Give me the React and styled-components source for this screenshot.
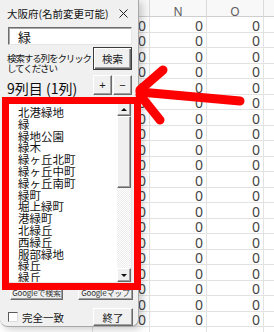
import styled, { createGlobalStyle } from "styled-components";

const GlobalStyle = createGlobalStyle`
  html, body {
    margin: 0;
    padding: 0;
  }
  body {
    width: 274px;
    height: 332px;
    overflow: hidden;
    background: #fff;
    font-family: "Noto Sans CJK JP", "Noto Sans", sans-serif;
  }
`;

// L is under the dialog and P runs past the window edge, so they stay blank
const columns = [
  { name: "", value: "" },
  { name: "", value: "0" },
  { name: "N", value: "0" },
  { name: "O", value: "0" },
  { name: "", value: "" },
];
const rowCount = 20;

const places = [
  "北港緑地",
  "緑",
  "緑地公園",
  "緑木",
  "緑ヶ丘北町",
  "緑ヶ丘中町",
  "緑ヶ丘南町",
  "緑町",
  "堀上緑町",
  "港緑町",
  "北緑丘",
  "西緑丘",
  "服部緑地",
  "緑丘",
  "緑丘",
];

function App() {
  return (
    <Screen>
      <GlobalStyle />
      <Sheet>
        {columns.map((c, i) => (
          <HeadCell key={i}>{c.name}</HeadCell>
        ))}
        {Array.from({ length: rowCount }).map((_, r) =>
          columns.map((c, i) => <Cell key={i + "-" + r}>{c.value}</Cell>)
        )}
        {/* the next row only peeks in under the window edge */}
        {columns.map((c, i) => (
          <Cell key={"last" + i} />
        ))}
      </Sheet>

      <Dialog>
        <TitleBar>
          <span>大阪府(名前変更可能)</span>
          <svg width="9" height="9" viewBox="0 0 9 9">
            <path d="M0.5 0.5 L8.5 8.5 M8.5 0.5 L0.5 8.5" stroke="#222" strokeWidth="1" />
          </svg>
        </TitleBar>

        <SearchInput defaultValue="緑" readOnly />

        <SearchRow>
          <Hint>
            <div>検索する列をクリック</div>
            <div>してください</div>
          </Hint>
          <DefaultButton>検索</DefaultButton>
        </SearchRow>

        <ColumnRow>
          <ColumnLabel>9列目 (1列)</ColumnLabel>
          <StepGroup>
            <StepButton>+</StepButton>
            <StepButton>−</StepButton>
          </StepGroup>
        </ColumnRow>

        <ListBox>
          <Items>
            {places.map((p, i) => (
              <Item key={i}>{p}</Item>
            ))}
          </Items>
          <ScrollBar>
            <ScrollButton>
              <Triangle $dir="up" />
            </ScrollButton>
            <Thumb />
            <Track />
            <ScrollButton>
              <Triangle $dir="down" />
            </ScrollButton>
          </ScrollBar>
        </ListBox>

        <GoogleRow>
          <GoogleButton $w={53}>Googleで検索</GoogleButton>
          <GoogleButton $w={55}>Googleマップ</GoogleButton>
        </GoogleRow>

        <BottomRow>
          <CheckLabel>
            <CheckBox />
            完全一致
          </CheckLabel>
          <CloseButton>終了</CloseButton>
        </BottomRow>
      </Dialog>

      <Highlight />
      <Arrow width="274" height="332" viewBox="0 0 274 332">
        <g stroke="#ff0000" strokeWidth="9" strokeLinecap="round" fill="none">
          <line x1="140" y1="92" x2="240" y2="101" />
          <line x1="140" y1="90" x2="163" y2="70" />
          <line x1="140" y1="95" x2="160" y2="120" />
        </g>
      </Arrow>
    </Screen>
  );
}

const Screen = styled.div`
  position: relative;
  width: 274px;
  height: 332px;
  overflow: hidden;
  background: #fff;
`;

const Sheet = styled.div`
  display: grid;
  grid-template-columns: repeat(5, 57px);
  grid-template-rows: 17px;
  grid-auto-rows: 15.5px;
  margin-left: 36px;
`;

const HeadCell = styled.div`
  box-sizing: border-box;
  display: flex;
  justify-content: center;
  padding-top: 6px;
  line-height: 11px;
  background: #f8f8f8;
  border-right: 1px solid #dadada;
  border-bottom: 1px solid #cfcfcf;
  font-family: "Noto Sans", sans-serif;
  font-size: 12px;
  color: #5c5c5c;
`;

const Cell = styled.div`
  box-sizing: border-box;
  display: flex;
  align-items: flex-end;
  justify-content: flex-end;
  padding-right: 3px;
  border-right: 1px solid #e2e2e2;
  border-bottom: 1px solid #e2e2e2;
  font-family: "Noto Sans", sans-serif;
  font-size: 14px;
  line-height: 13px;
  color: #444;
`;

const Dialog = styled.div`
  position: absolute;
  left: 0;
  top: 0;
  width: 139px;
  height: 327px;
  box-sizing: border-box;
  display: flex;
  flex-direction: column;
  padding: 0 6px 0 8px;
  background: #f0f0f0;
  border-right: 1px solid #a8a8a8;
  border-bottom: 1px solid #a8a8a8;
  border-radius: 0 0 8px 8px;
  box-shadow: 3px 2px 8px rgba(0, 0, 0, 0.22);
  color: #141414;
`;

const TitleBar = styled.div`
  height: 27px;
  display: flex;
  align-items: center;
  justify-content: space-between;
  margin-left: -1px;
  padding-right: 4px;
  font-size: 10.5px;
`;

const SearchInput = styled.input`
  box-sizing: border-box;
  height: 18px;
  width: 124px;
  margin: 0;
  padding: 0 0 0 9px;
  background: #fff;
  border: 1px solid;
  border-color: #6e6e6e #e6e6e6 #e6e6e6 #6e6e6e;
  box-shadow: inset 1px 1px #a8a8a8;
  font-family: "Noto Sans CJK JP", sans-serif;
  font-size: 13px;
  color: #111;
  outline: none;
`;

const SearchRow = styled.div`
  height: 23px;
  margin-top: 2px;
  display: flex;
  justify-content: space-between;
  align-items: flex-start;
`;

const Hint = styled.div`
  margin: 6px 0 0 -1px;
  font-size: 9.5px;
  line-height: 10px;
  letter-spacing: -1.1px;
  white-space: nowrap;

  & > div {
    height: 10px;
  }
`;

const raised = `
  box-sizing: border-box;
  display: flex;
  align-items: center;
  justify-content: center;
  background: #f0f0f0;
  border: 1px solid;
  border-color: #ffffff #6a6a6a #6a6a6a #ffffff;
  box-shadow: inset -1px -1px #a0a0a0;
  color: #1a1a1a;
  font-family: "Noto Sans CJK JP", sans-serif;
`;

const DefaultButton = styled.div`
  ${raised}
  width: 39px;
  height: 23px;
  border: 1px solid #3c3c3c;
  box-shadow: inset 1px 1px #ffffff, inset -1px -1px #6a6a6a, inset -2px -2px #a0a0a0;
  font-size: 10.5px;
`;

const ColumnRow = styled.div`
  height: 20px;
  margin-top: 5px;
  display: flex;
  justify-content: space-between;
  align-items: flex-end;
`;

const ColumnLabel = styled.div`
  margin-left: -1px;
  font-size: 14px;
  line-height: 14px;
  color: #0c0c0c;
`;

const StepGroup = styled.div`
  display: flex;
  gap: 1px;
  align-self: stretch;
`;

const StepButton = styled.div`
  ${raised}
  width: 19px;
  font-family: "Liberation Sans", sans-serif;
  font-size: 11px;
`;

const ListBox = styled.div`
  box-sizing: border-box;
  height: 182px;
  margin-top: 6px;
  display: flex;
  background: #fff;
  border: 1px solid;
  border-color: #6e6e6e #e6e6e6 #e6e6e6 #6e6e6e;
  overflow: hidden;
`;

const Items = styled.div`
  flex: 1;
  padding: 5px 0 0 9px;
  overflow: hidden;
`;

const Item = styled.div`
  font-size: 11.5px;
  line-height: 11.8px;
  height: 11.8px;
  color: #111;
  white-space: nowrap;
`;

const ScrollBar = styled.div`
  width: 14px;
  display: flex;
  flex-direction: column;
`;

const ScrollButton = styled.div`
  ${raised}
  height: 14px;
  flex: none;
`;

const Triangle = styled.span`
  width: 0;
  height: 0;
  border-left: 3px solid transparent;
  border-right: 3px solid transparent;
  ${(p) =>
    p.$dir === "up"
      ? "border-bottom: 3px solid #111;"
      : "border-top: 3px solid #111;"}
`;

const Thumb = styled.div`
  ${raised}
  height: 72px;
  flex: none;
`;

const Track = styled.div`
  flex: 1;
  background: repeating-conic-gradient(#ffffff 0 25%, #ececec 0 50%) 0 0 / 2px 2px;
`;

const GoogleRow = styled.div`
  height: 17px;
  margin: 0 -1px 0 0;
  padding-left: 2px;
  display: flex;
  justify-content: space-between;
`;

const GoogleButton = styled.div`
  ${raised}
  width: ${(p) => p.$w}px;
  padding-top: 2px;
  font-size: 8px;
  letter-spacing: -0.2px;
  color: #333;
  white-space: nowrap;
  overflow: hidden;
`;

const BottomRow = styled.div`
  height: 18px;
  margin: 8px -1px 0 0;
  display: flex;
  justify-content: space-between;
  align-items: center;
`;

const CheckLabel = styled.label`
  display: flex;
  align-items: center;
  gap: 4px;
  font-size: 10.5px;
  color: #141414;
`;

const CheckBox = styled.span`
  box-sizing: border-box;
  width: 10px;
  height: 10px;
  background: #fff;
  border: 1px solid;
  border-color: #5a5a5a #dcdcdc #dcdcdc #5a5a5a;
`;

const CloseButton = styled.div`
  ${raised}
  width: 40px;
  height: 18px;
  font-size: 10.5px;
`;

const Highlight = styled.div`
  position: absolute;
  left: 2px;
  top: 97px;
  width: 139px;
  height: 193px;
  box-sizing: border-box;
  border: 7px solid #ff0000;
  pointer-events: none;
`;

const Arrow = styled.svg`
  position: absolute;
  left: 0;
  top: 0;
  pointer-events: none;
`;

export default App;
